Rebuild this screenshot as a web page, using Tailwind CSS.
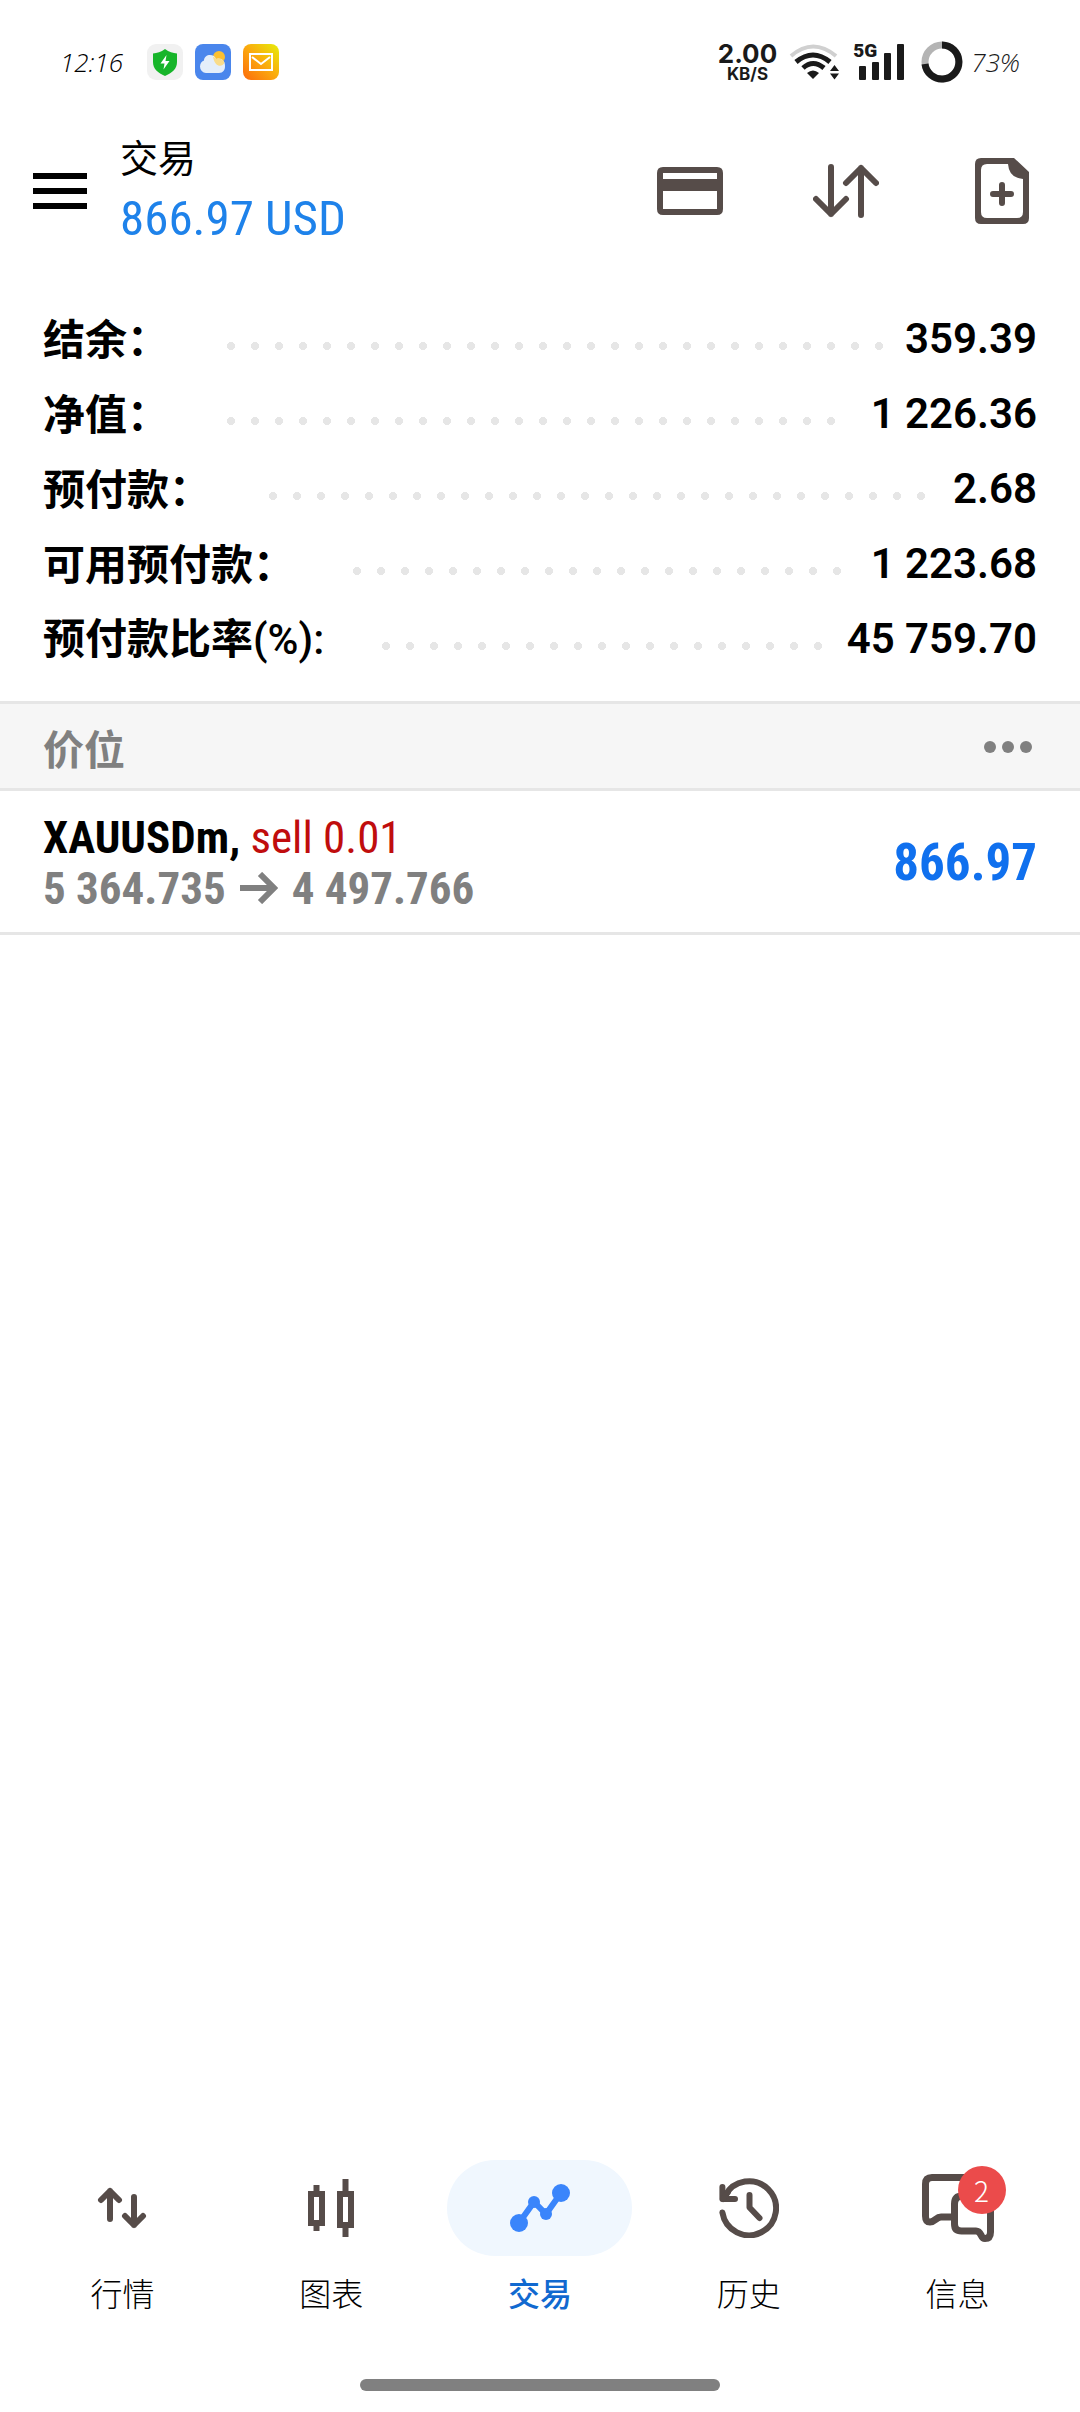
<!DOCTYPE html>
<html lang="zh-CN">
<head>
    <meta charset="UTF-8">
    <meta name="viewport" content="width=device-width, initial-scale=1.0">
    <title>交易</title>
    <script src="https://cdn.jsdelivr.net/npm/@tailwindcss/browser@4"></script>
</head>
<body class="bg-white text-black font-['Roboto','Noto_Sans_CJK_SC',sans-serif]">
<div class="min-h-screen flex flex-col">
    <!-- status bar -->
    <div class="h-[124px] pl-[60px] pr-[60px] flex items-center justify-between">
        <div class="flex items-center">
            <span class="w-[87px] text-[26px] leading-9 italic font-light font-['Open_Sans',sans-serif]">12:16</span>
            <div class="flex gap-3">
                <svg class="size-9" viewBox="0 0 36 36">
                    <rect width="36" height="36" rx="9" fill="#f1f1f1"/>
                    <path d="M18 5C22 8 26 9 30 9.500V18C30 25 25 29 18 32C11 29 6 25 6 18V9.500C10 9 14 8 18 5Z" fill="#17b52a"/>
                    <path d="M19.500 11L13.500 19.500H17.500L16.500 25.500L22.500 17H18.500Z" fill="#fff"/>
                </svg>
                <svg class="size-9" viewBox="0 0 36 36">
                    <rect width="36" height="36" rx="8" fill="#4a86ec"/>
                    <circle cx="24" cy="13" r="6" fill="#fcc030"/>
                    <path d="M11 29A6.500 6.500 0 0 1 5 22.500C5 19 7 17 9 16.500C9 13 12 11 15 11C18 11 20 12.500 21 15C26 13 30.500 17 30 22.500C30 26 28 29 24 29Z" fill="#e4eefa"/>
                    <path d="M18 13C19.500 13 20.500 14 21 15C25 13.500 28 15.500 29.500 18.500C27 24 20 23 18 13Z" fill="#f9dc8a"/>
                </svg>
                <svg class="size-9" viewBox="0 0 36 36">
                    <defs>
                        <linearGradient id="mailbg" x1="0" y1="1" x2="1" y2="0">
                            <stop offset="0" stop-color="#fc6a0c"/>
                            <stop offset=".5" stop-color="#fba90e"/>
                            <stop offset="1" stop-color="#e6ee0a"/>
                        </linearGradient>
                    </defs>
                    <rect width="36" height="36" rx="8" fill="url(#mailbg)"/>
                    <rect x="7" y="10" width="22" height="16" fill="none" stroke="#fff" stroke-width="2"/>
                    <path d="M9 13L18 20L27 13" fill="none" stroke="#fff" stroke-width="2"/>
                </svg>
            </div>
        </div>
        <div class="flex items-center text-[#1a1a1a]">
            <div class="flex flex-col items-center font-bold font-['Inter',sans-serif]">
                <span class="text-[26px] leading-6">2.00</span>
                <span class="text-[17px] leading-4">KB/S</span>
            </div>
            <svg class="w-[50px] h-9 ml-3" viewBox="0 0 50 36">
                <path d="M2 12Q24 -7 47 12" fill="none" stroke="#d0d0d0" stroke-width="4"/>
                <path d="M7 18Q24 4 41 18M14 24Q24 15 35 24" fill="none" stroke="#1a1a1a" stroke-width="5"/>
                <path d="M24 35L18 29Q24 24 30 29Z" fill="#1a1a1a"/>
                <path d="M41 27L45.500 21L50 27ZM41 29.500H50L45.500 35.500Z" fill="#1a1a1a"/>
            </svg>
            <div class="relative w-[51px] h-9 ml-[14px]">
                <span class="absolute -top-[3px] left-0 text-[19px] leading-5 font-black font-['Roboto',sans-serif]">5G</span>
                <svg class="w-[51px] h-9" viewBox="0 0 51 36" fill="#1a1a1a">
                    <rect x="6" y="22" width="7" height="14" rx="1"/>
                    <rect x="19" y="18" width="7" height="18" rx="1"/>
                    <rect x="31" y="9" width="7" height="27" rx="1"/>
                    <rect x="44" y="0" width="7" height="36" rx="1"/>
                </svg>
            </div>
            <svg class="size-[42px] ml-[17px]" viewBox="0 0 42 42" fill="none" stroke-width="7">
                <circle cx="21" cy="21" r="17" stroke="#b4b4b4"/>
                <path d="M21 4A17 17 0 1 1 4 23" stroke="#1a1a1a"/>
            </svg>
            <span class="ml-2 text-[26px] leading-9 italic font-light font-['Open_Sans',sans-serif]">73%</span>
        </div>
    </div>

    <!-- app bar -->
    <header class="h-[134px] flex items-center">
        <button type="button" aria-label="菜单" class="w-[120px] flex flex-col items-center gap-[9px]">
            <span class="w-[54px] h-[6px] bg-black"></span>
            <span class="w-[54px] h-[6px] bg-black"></span>
            <span class="w-[54px] h-[6px] bg-black"></span>
        </button>
        <div class="flex-1 flex flex-col gap-1">
            <h1 class="text-[38px] leading-[52px] font-['Noto_Sans_CJK_SC',sans-serif]">交易</h1>
            <p class="text-[49px] leading-[66px] text-[#1e82ea] whitespace-nowrap font-['Roboto_Condensed','Liberation_Sans_Narrow','Roboto',sans-serif]">866.97 USD</p>
        </div>
        <button type="button" aria-label="账户" class="w-[156px] flex justify-center">
            <svg class="w-[66px] h-12" viewBox="0 0 66 48">
                <path fill="#564c49" fill-rule="evenodd" d="M6 0H60Q66 0 66 6V42Q66 48 60 48H6Q0 48 0 42V6Q0 0 6 0ZM6 6V12H60V6ZM6 24V42H60V24Z"/>
            </svg>
        </button>
        <button type="button" aria-label="排序" class="w-[156px] flex justify-center">
            <svg class="w-[66px] h-[54px]" viewBox="0 0 66 54" fill="none" stroke="#564c49" stroke-width="6" stroke-linecap="round" stroke-linejoin="round">
                <path d="M18 3V50M3 35L18 50L33 35M48 51V4M33 19L48 4L63 19"/>
            </svg>
        </button>
        <button type="button" aria-label="新订单" class="w-[156px] flex justify-center">
            <svg class="w-[54px] h-[66px]" viewBox="0 0 54 66">
                <path fill="#564c49" fill-rule="evenodd" d="M6 0H39L54 14V60Q54 66 48 66H6Q0 66 0 60V6Q0 0 6 0ZM12 6Q6 6 6 12V54Q6 60 12 60H42Q48 60 48 54V21Q34 20 33 6Z"/>
                <path d="M27 27V45M18 36H36" stroke="#564c49" stroke-width="6" stroke-linecap="round"/>
            </svg>
        </button>
    </header>

    <main class="flex-1">
        <!-- account summary -->
        <dl class="pt-[42px] pb-[26px] px-[43px] text-[42px] leading-[75px] font-semibold">
            <div class="h-[75px] flex items-center">
                <dt class="pb-[2px] font-bold font-['Noto_Sans_CJK_SC',sans-serif]">结余：</dt>
                <dd class="flex-1 pt-[2px] flex items-center">
                    <span class="flex-1 h-2 mt-[14px] ml-[58px] mr-5 bg-[radial-gradient(circle_at_4px_4px,#e6e6e6_4px,transparent_4px)] bg-[length:24px_8px]"></span>359.39
                </dd>
            </div>
            <div class="h-[75px] flex items-center">
                <dt class="pb-[2px] font-bold font-['Noto_Sans_CJK_SC',sans-serif]">净值：</dt>
                <dd class="flex-1 pt-[2px] flex items-center">
                    <span class="flex-1 h-2 mt-[14px] ml-[58px] mr-5 bg-[radial-gradient(circle_at_4px_4px,#e6e6e6_4px,transparent_4px)] bg-[length:24px_8px]"></span>1 226.36
                </dd>
            </div>
            <div class="h-[75px] flex items-center">
                <dt class="pb-[2px] font-bold font-['Noto_Sans_CJK_SC',sans-serif]">预付款：</dt>
                <dd class="flex-1 pt-[2px] flex items-center">
                    <span class="flex-1 h-2 mt-[14px] ml-[58px] mr-5 bg-[radial-gradient(circle_at_4px_4px,#e6e6e6_4px,transparent_4px)] bg-[length:24px_8px]"></span>2.68
                </dd>
            </div>
            <div class="h-[75px] flex items-center">
                <dt class="pb-[2px] font-bold font-['Noto_Sans_CJK_SC',sans-serif]">可用预付款：</dt>
                <dd class="flex-1 pt-[2px] flex items-center">
                    <span class="flex-1 h-2 mt-[14px] ml-[58px] mr-5 bg-[radial-gradient(circle_at_4px_4px,#e6e6e6_4px,transparent_4px)] bg-[length:24px_8px]"></span>1 223.68
                </dd>
            </div>
            <div class="h-[75px] flex items-center">
                <dt class="font-bold font-['Noto_Sans_CJK_SC',sans-serif]">预付款比率<span class="font-medium font-['Roboto',sans-serif]">(%):</span></dt>
                <dd class="flex-1 pt-[2px] flex items-center">
                    <span class="flex-1 h-2 mt-[14px] ml-[58px] mr-5 bg-[radial-gradient(circle_at_4px_4px,#e6e6e6_4px,transparent_4px)] bg-[length:24px_8px]"></span>45 759.70
                </dd>
            </div>
        </dl>

        <!-- open positions -->
        <section>
            <div class="h-[90px] pt-[2px] px-[43px] flex items-center justify-between bg-[#f6f6f6] border-y-3 border-[#e6e6e6]">
                <h2 class="text-[41px] leading-[60px] font-bold text-[#808080] font-['Noto_Sans_CJK_SC',sans-serif]">价位</h2>
                <button type="button" aria-label="更多" class="flex gap-[6px] mr-[5px]">
                    <span class="size-3 rounded-full bg-[#808080]"></span>
                    <span class="size-3 rounded-full bg-[#808080]"></span>
                    <span class="size-3 rounded-full bg-[#808080]"></span>
                </button>
            </div>
            <div class="h-[144px] pt-[2px] px-[43px] flex items-center justify-between border-b-3 border-[#e6e6e6] font-['Roboto_Condensed','Liberation_Sans_Narrow','Roboto',sans-serif]">
                <div class="text-[45px] leading-[51px]">
                    <p><span class="font-bold">XAUUSDm,</span> <span class="text-[#c00d0d]">sell 0.01</span></p>
                    <p class="flex items-center font-bold text-[#808080]">5 364.735
                        <svg class="w-[38px] h-8 mx-[14px]" viewBox="0 0 38 32" fill="none" stroke="#808080" stroke-width="6">
                            <path d="M0 16H34M20 2L34 16L20 30"/>
                        </svg>4 497.766
                    </p>
                </div>
                <p class="text-[51px] leading-[60px] font-bold text-[#1070ee]">866.97</p>
            </div>
        </section>
    </main>

    <!-- bottom tabs -->
    <nav class="px-[18px] grid grid-cols-5 text-[32px] leading-[48px] font-light font-['Noto_Sans_CJK_SC',sans-serif]">
        <a href="#" class="flex flex-col items-center gap-3">
            <span class="h-24 flex items-center">
                <svg class="w-[50px] h-11" viewBox="0 0 50 44" fill="none" stroke="#564c49" stroke-width="6" stroke-linecap="round" stroke-linejoin="round">
                    <path d="M13 33V5M4 14L13 5L22 14M37 11V39M28 30L37 39L46 30"/>
                </svg>
            </span>
            行情
        </a>
        <a href="#" class="flex flex-col items-center gap-3">
            <span class="h-24 flex items-center">
                <svg class="w-[46px] h-[58px]" viewBox="0 0 46 58" fill="none" stroke="#564c49" stroke-width="6">
                    <path d="M3 15H14V44H3ZM32 15H43V46H32ZM8.500 6V12M8.500 46V52M37.500 0V12M37.500 48V58"/>
                </svg>
            </span>
            图表
        </a>
        <a href="#" aria-current="page" class="flex flex-col items-center gap-3 font-medium text-[#1169d0]">
            <span class="h-24 w-[185px] flex items-center justify-center rounded-full bg-[#f0f7fe]">
                <svg class="w-[60px] h-12" viewBox="0 0 60 48" fill="#3a85fb">
                    <path d="M9 39L24 18L36 30L51 9" fill="none" stroke="#3a85fb" stroke-width="6"/>
                    <circle cx="9" cy="39" r="9"/>
                    <circle cx="24" cy="18" r="6"/>
                    <circle cx="36" cy="30" r="6"/>
                    <circle cx="51" cy="9" r="9"/>
                </svg>
            </span>
            交易
        </a>
        <a href="#" class="flex flex-col items-center gap-3">
            <span class="h-24 flex items-center">
                <svg class="size-[60px]" viewBox="0 0 60 60" fill="none" stroke="#564c49" stroke-width="6" stroke-linecap="round" stroke-linejoin="round">
                    <path d="M3.400 34.500A27 27 0 1 0 6 18"/>
                    <path d="M3.400 9V21H16" />
                    <path d="M4 21L9 14" />
                    <path d="M30.500 17V29.500L40.500 40"/>
                </svg>
            </span>
            历史
        </a>
        <a href="#" class="flex flex-col items-center gap-3">
            <span class="h-24 flex items-center">
                <span class="relative">
                    <svg class="w-[72px] h-[68px]" viewBox="0 0 72 68" fill="none" stroke="#564c49" stroke-width="7" stroke-linejoin="round">
                        <path d="M33 43H19C14 43 13 48 8 48Q3.500 48 3.500 42V10Q3.500 3.500 10 3.500H55"/>
                        <path d="M60 22H40Q32.500 22 32.500 30V50Q32.500 57 39.500 57H54C60 57 58 64.500 63 64.500Q68.500 64.500 68.500 58V22"/>
                    </svg>
                    <span class="absolute -top-2 left-9 size-12 rounded-full bg-[#eb4b4b] text-white text-[28px] leading-[48px] text-center">2</span>
                </span>
            </span>
            信息
        </a>
    </nav>
    <div class="h-[96px] flex items-end justify-center pb-[21px]">
        <div class="w-1/3 h-3 rounded-full bg-[#808080]"></div>
    </div>
</div>
</body>
</html>
